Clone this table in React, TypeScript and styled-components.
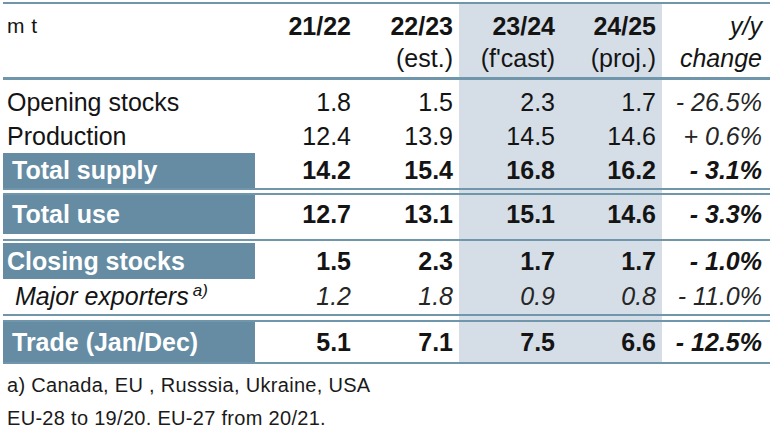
import React from 'react'
import styled, { createGlobalStyle } from 'styled-components'

const LINE = '#7096ab'
const BOX = '#658ca3'
const SHADE = '#d5dde6'
const COLS = '252px 102px 102px 102px 101px 1fr'

const GlobalStyle = createGlobalStyle`
    html, body {
        margin: 0;
        padding: 0;
        background: #fff;
    }
    body {
        font-family: "Liberation Sans", Arial, sans-serif;
        color: #141414;
    }
`

const Page = styled.div`
    box-sizing: border-box;
    width: 776px;
    height: 435px;
    overflow: hidden;
    padding: 2px 6px 0 3px;
`

const Table = styled.div`
    border-top: 2px solid ${LINE};
    border-bottom: 2px solid ${LINE};
    background: linear-gradient(
        to right,
        transparent 456px,
        ${SHADE} 456px,
        ${SHADE} 659px,
        transparent 659px
    );
`

const Header = styled.div`
    box-sizing: border-box;
    display: grid;
    grid-template-columns: ${COLS};
    height: 73px;
    padding-top: 6px;
`

const Unit = styled.div`
    font-size: 21px;
    letter-spacing: 0.5px;
    line-height: 32px;
    padding-left: 4px;
`

const HeadCell = styled.div<{ $italic?: boolean; $last?: boolean }>`
    display: flex;
    flex-direction: column;
    align-items: flex-end;
    padding-right: ${({ $last }) => ($last ? 8 : 6)}px;
    font-size: 25px;
    line-height: 32px;
    font-style: ${({ $italic }) => ($italic ? 'italic' : 'normal')};
`

const HeadTop = styled.span<{ $plain?: boolean }>`
    font-weight: ${({ $plain }) => ($plain ? 400 : 700)};
`

const Rule = styled.div<{ $gap?: number; $above?: number; $below?: number; $thick?: boolean }>`
    height: ${({ $gap }) => $gap ?? 0}px;
    border-top: ${({ $thick }) => ($thick ? 3 : 2)}px solid ${LINE};
    border-bottom: ${({ $gap }) => ($gap ? `2px solid ${LINE}` : 'none')};
    margin: ${({ $above }) => $above ?? 0}px 0 ${({ $below }) => $below ?? 0}px;
`

const Row = styled.div<{ $h: number }>`
    display: grid;
    grid-template-columns: ${COLS};
    height: ${({ $h }) => $h}px;
    font-size: 25px;
`

const Label = styled.div<{ $box?: boolean; $pad: number; $italic?: boolean }>`
    display: flex;
    align-items: center;
    padding-left: ${({ $pad }) => $pad}px;
    white-space: nowrap;
    background: ${({ $box }) => ($box ? BOX : 'transparent')};
    color: ${({ $box }) => ($box ? '#fff' : 'inherit')};
    font-weight: ${({ $box }) => ($box ? 700 : 400)};
    font-style: ${({ $italic }) => ($italic ? 'italic' : 'normal')};
`

const Sup = styled.span`
    align-self: flex-start;
    font-size: 17px;
    line-height: 17px;
    margin: 3px 0 0 4px;
`

const Value = styled.div<{ $bold?: boolean; $italic?: boolean; $last?: boolean }>`
    display: flex;
    align-items: center;
    justify-content: flex-end;
    padding-right: ${({ $last }) => ($last ? 8 : 6)}px;
    font-weight: ${({ $bold }) => ($bold ? 700 : 400)};
    font-style: ${({ $italic }) => ($italic ? 'italic' : 'normal')};
    color: ${({ $italic, $bold }) => ($italic && !$bold ? '#262626' : '#141414')};
`

const Notes = styled.div`
    margin-top: 5px;
    padding-left: 4px;
    font-size: 20px;
    letter-spacing: 0.3px;
    line-height: 33px;
    color: #1a1a1a;
`

type RowData = {
    label: string
    h: number
    values: string[]
    change: string
    box?: boolean
    pad?: number
    italic?: boolean
    sup?: string
}

const rows: RowData[] = [
    { label: 'Opening stocks', h: 34, values: ['1.8', '1.5', '2.3', '1.7'], change: '- 26.5%' },
    { label: 'Production', h: 34, values: ['12.4', '13.9', '14.5', '14.6'], change: '+ 0.6%' },
    { label: 'Total supply', h: 35, values: ['14.2', '15.4', '16.8', '16.2'], change: '- 3.1%', box: true, pad: 9 },
    { label: 'Total use', h: 39, values: ['12.7', '13.1', '15.1', '14.6'], change: '- 3.3%', box: true, pad: 9 },
    { label: 'Closing stocks', h: 36, values: ['1.5', '2.3', '1.7', '1.7'], change: '- 1.0%', box: true, pad: 4 },
    { label: 'Major exporters', h: 35, values: ['1.2', '1.8', '0.9', '0.8'], change: '- 11.0%', italic: true, pad: 12, sup: 'a)' },
    { label: 'Trade (Jan/Dec)', h: 40, values: ['5.1', '7.1', '7.5', '6.6'], change: '- 12.5%', box: true, pad: 9 },
]

const TableRow: React.FC<{ row: RowData }> = ({ row }) => (
    <Row $h={row.h}>
        <Label $box={row.box} $pad={row.pad ?? 4} $italic={row.italic}>
            {row.label}
            {row.sup && <Sup>{row.sup}</Sup>}
        </Label>
        {row.values.map((v, i) => (
            <Value key={i} $bold={row.box} $italic={row.italic}>
                {v}
            </Value>
        ))}
        <Value $bold={row.box} $italic $last>
            {row.change}
        </Value>
    </Row>
)

const App: React.FC = () => {
    return (
        <>
            <GlobalStyle />
            <Page>
                <Table>
                    <Header>
                        <Unit>m t</Unit>
                        <HeadCell>
                            <HeadTop>21/22</HeadTop>
                        </HeadCell>
                        <HeadCell>
                            <HeadTop>22/23</HeadTop>
                            <span>(est.)</span>
                        </HeadCell>
                        <HeadCell>
                            <HeadTop>23/24</HeadTop>
                            <span>(f'cast)</span>
                        </HeadCell>
                        <HeadCell>
                            <HeadTop>24/25</HeadTop>
                            <span>(proj.)</span>
                        </HeadCell>
                        <HeadCell $italic $last>
                            <HeadTop $plain>y/y</HeadTop>
                            <span>change</span>
                        </HeadCell>
                    </Header>
                    <Rule $thick $below={5} />
                    <TableRow row={rows[0]} />
                    <TableRow row={rows[1]} />
                    <TableRow row={rows[2]} />
                    <Rule $gap={3} />
                    <TableRow row={rows[3]} />
                    <Rule $above={5} $below={2} />
                    <TableRow row={rows[4]} />
                    <TableRow row={rows[5]} />
                    <Rule $gap={4} />
                    <TableRow row={rows[6]} />
                </Table>
                <Notes>
                    <div>a) Canada, EU , Russsia, Ukraine, USA</div>
                    <div>EU-28 to 19/20. EU-27 from 20/21.</div>
                </Notes>
            </Page>
        </>
    )
}

export default App
